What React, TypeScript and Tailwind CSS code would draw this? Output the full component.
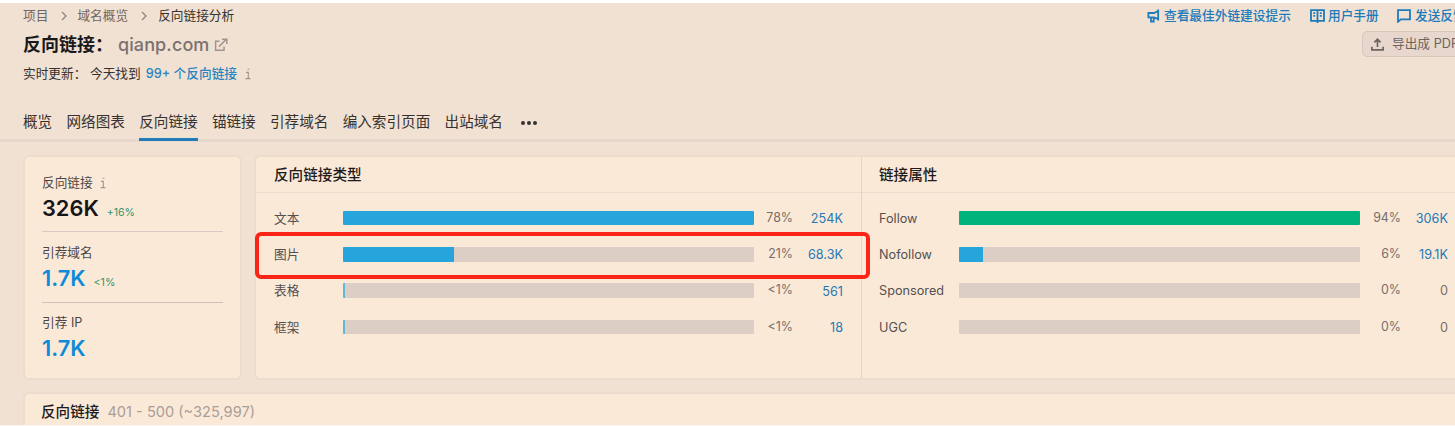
import React from "react";

type Row = { label: string; fill: number; color: string; pct: string; value: string; link: boolean };

const types: Row[] = [
  { label: "文本", fill: 100, color: "bg-[#26a5dc]", pct: "78%", value: "254K", link: true },
  { label: "图片", fill: 27, color: "bg-[#26a5dc]", pct: "21%", value: "68.3K", link: true },
  { label: "表格", fill: 0.6, color: "bg-[#5fb8dc]", pct: "<1%", value: "561", link: true },
  { label: "框架", fill: 0.6, color: "bg-[#5fb8dc]", pct: "<1%", value: "18", link: true },
];

const attributes: Row[] = [
  { label: "Follow", fill: 100, color: "bg-[#00b27c]", pct: "94%", value: "306K", link: true },
  { label: "Nofollow", fill: 6, color: "bg-[#26a5dc]", pct: "6%", value: "19.1K", link: true },
  { label: "Sponsored", fill: 0, color: "bg-[#26a5dc]", pct: "0%", value: "0", link: false },
  { label: "UGC", fill: 0, color: "bg-[#26a5dc]", pct: "0%", value: "0", link: false },
];

const tabs = ["概览", "网络图表", "反向链接", "锚链接", "引荐域名", "编入索引页面", "出站域名"];

function Chevron() {
  return (
    <svg width="6" height="10" viewBox="0 0 6 10" fill="none" stroke="#8d8480" strokeWidth="1.3">
      <path d="M1 1l4 4-4 4" />
    </svg>
  );
}

function Info({ className }: { className?: string }) {
  return (
    <svg className={className} width="6" height="12" viewBox="0 0 6 12" fill="none" stroke="#a0958e" strokeWidth="1.1">
      <path d="M2.6 1.2h1.8M1 4.4h2.3v6.1M.6 10.6h4.8" />
    </svg>
  );
}

function Megaphone() {
  return (
    <svg className="shrink-0" width="13" height="14" viewBox="0 0 13 14" fill="none" stroke="#1c7bbb" strokeWidth="1.8">
      <path d="M11.2 .6v11M11.2 2L7 4H1.4v4.3H7l4.2 1.8M4 8.5v4h2.7v-4" />
    </svg>
  );
}

function Book() {
  return (
    <svg className="shrink-0" width="15" height="14" viewBox="0 0 15 14" fill="none" stroke="#1c7bbb" strokeWidth="1.8">
      <path d="M1 1.2h13v10.6H1zM7.5 1v13M3.3 4.2h1.9M3.3 6.8h1.9M9.8 4.2h1.9M9.8 6.8h1.9" />
    </svg>
  );
}

function Bubble() {
  return (
    <svg className="shrink-0" width="14" height="14" viewBox="0 0 14 14" fill="none" stroke="#1c7bbb" strokeWidth="1.8">
      <path d="M1 12.8V1.2h12v9.2H3.8L1 12.8z" />
    </svg>
  );
}

function Upload() {
  return (
    <svg className="shrink-0" width="13" height="13" viewBox="0 0 13 13" fill="none" stroke="#6c6461" strokeWidth="1.7">
      <path d="M6.5 9V1.6M3.4 4.4l3.1-3.1 3.1 3.1M.9 8.8v3.1h11.2V8.8" />
    </svg>
  );
}

function External() {
  return (
    <svg width="14" height="14" viewBox="0 0 14 14" fill="none" stroke="#a0958e" strokeWidth="1.5">
      <path d="M5.5 3.2H1.6v9H10V8.5M5 8.6l7-7M8 1.2h4.8V6" />
    </svg>
  );
}

function Bars({ title, rows, labelWidth, pctWidth, valueWidth, className, pad }: {
  title: string; rows: Row[]; labelWidth: string; pctWidth: string; valueWidth: string; className: string; pad: string;
}) {
  return (
    <section className={`flex flex-col ${className}`}>
      <h2 className={`flex h-9 shrink-0 items-center border-b border-[#eddccd] pt-[2px] text-[14.6px] font-medium text-[#1d1b1c] ${pad}`}>
        {title}
      </h2>
      <div className={`flex flex-col pt-[7px] ${pad}`}>
        {rows.map((r) => (
          <div key={r.label} className="flex h-[36.3px] items-center text-[12.7px]">
            <span className={`${labelWidth} shrink-0 text-[#555050]`}>{r.label}</span>
            <div className="h-[14.5px] flex-1 overflow-hidden rounded-[1px] bg-[#ddcec5]">
              <div className={`h-full ${r.color}`} style={{ width: `${r.fill}%` }} />
            </div>
            <span className={`${pctWidth} shrink-0 text-right text-[12.4px] text-[#766e6a]`}>{r.pct}</span>
            <span className={`${valueWidth} shrink-0 text-right ${r.link ? "pt-px text-[#2479b5]" : "text-[#766e6a]"}`}>{r.value}</span>
          </div>
        ))}
      </div>
    </section>
  );
}

function Stat({ label, value, change, blue, info }: { label: string; value: string; change?: string; blue?: boolean; info?: boolean }) {
  return (
    <>
      <div className="flex h-5 items-center gap-[7px] text-[12.7px] text-[#4b4646]">
        {label}
        {info && <Info />}
      </div>
      <div className="-mt-px mb-px flex h-8 items-baseline gap-2 leading-8">
        <span className={`text-[21.8px] font-semibold ${blue ? "text-[#0d8ad8]" : "text-[#161519]"}`}>{value}</span>
        {change && <span className="text-[10.6px] text-[#36936b]">{change}</span>}
      </div>
    </>
  );
}

export default function App() {
  return (
    <div className="flex h-[426px] w-[1455px] flex-col overflow-hidden border-t-3 border-b border-t-white border-b-[#faf5f0] bg-[#f0e1d2] font-['Inter','Noto_Sans_CJK_SC',sans-serif] whitespace-nowrap">
      <header className="flex h-[139px] shrink-0 justify-between border-b-3 border-[#e6d8cc] pl-[23px]">
        <div className="flex flex-col">
          <nav className="flex h-[25px] items-center text-[12.7px] text-[#6f6763]">
            <span className="mr-[13px]">项目</span>
            <Chevron />
            <span className="mr-[13px] ml-[10px]">域名概览</span>
            <Chevron />
            <span className="ml-[11px] text-[#37322f]">反向链接分析</span>
          </nav>
          <h1 className="flex h-[33px] items-center text-[18px]">
            <span className="w-[95px] font-bold text-[#1a191c]">反向链接：</span>
            <span className="mr-[5px] font-medium tracking-[0.1px] text-[#7b726f]">qianp.com</span>
            <External />
          </h1>
          <p className="flex h-[26px] items-center text-[12.7px] text-[#37322f]">
            <span className="w-[67px]">实时更新：</span>
            <span className="mr-[5px]">今天找到</span>
            <span className="font-medium text-[#2a85c0]">99+ 个反向链接</span>
            <Info className="ml-2" />
          </p>
          <div className="mt-auto -mb-[2px] flex items-end gap-[14.3px] text-[14.6px] text-[#373230]">
            {tabs.map((t, i) => (
              <span key={t} className={`flex h-[33px] items-center border-b-3 ${i === 2 ? "border-[#227cba]" : "border-transparent"}`}>
                {t}
              </span>
            ))}
            <span className="flex h-[33px] items-center gap-[2px] border-b-3 border-transparent pl-1">
              <i className="size-1 rounded-full bg-[#373230]" />
              <i className="size-1 rounded-full bg-[#373230]" />
              <i className="size-1 rounded-full bg-[#373230]" />
            </span>
          </div>
        </div>
        <div className="flex w-[308px] shrink-0 flex-col overflow-hidden">
          <div className="flex h-[25px] items-center text-[12.7px] font-medium text-[#1c7bbb]">
            <Megaphone />
            <span className="ml-1 w-[146px] shrink-0">查看最佳外链建设提示</span>
            <Book />
            <span className="ml-[3px] w-[69px] shrink-0">用户手册</span>
            <Bubble />
            <span className="ml-1 shrink-0">发送反馈</span>
          </div>
          <button className="mt-[3px] ml-[215px] flex h-[26px] w-[120px] shrink-0 items-center gap-2 rounded-[5px] border border-[#d6c7be] bg-[#e7d7cc] pl-2 text-[12.7px] text-[#6c6461]">
            <Upload />
            <span>导出成 PDF</span>
          </button>
        </div>
      </header>
      <main className="flex shrink-0 flex-col gap-3 pt-[13px] pl-[23px]">
        <div className="flex h-[225px] gap-3">
          <aside className="flex w-[219px] shrink-0 flex-col rounded-md border-2 border-[#ecdccd] bg-[#fbe9d8] px-[17px] pt-4">
            <Stat label="反向链接" value="326K" change="+16%" info />
            <div className="mt-[6px] mb-[11px] h-px shrink-0 bg-[#d9cac1]" />
            <Stat label="引荐域名" value="1.7K" change="<1%" blue />
            <div className="mt-[7px] mb-[10px] h-px shrink-0 bg-[#cfc1ba]" />
            <Stat label="引荐 IP" value="1.7K" blue />
          </aside>
          <div className="relative flex w-[1213px] shrink-0 rounded-l-md border-y-2 border-l-2 border-[#ecdccd] bg-[#fbe9d8]">
            <Bars title="反向链接类型" rows={types} labelWidth="w-[69px]" pctWidth="w-[39px]" valueWidth="w-[50px]" className="w-[606px] border-r border-[#e2d2c7]" pad="pl-[18px] pr-[18px]" />
            <Bars title="链接属性" rows={attributes} labelWidth="w-[80px]" pctWidth="w-[41px]" valueWidth="w-[47px]" className="flex-1" pad="pl-[17px] pr-[19px]" />
            <div className="absolute top-[75px] -left-px h-[47px] w-[615px] rounded-[6px] border-4 border-[#fb2517]" />
          </div>
        </div>
        <section className="flex h-[60px] items-start gap-2 rounded-tl-md border-t-2 border-l-2 border-[#ecdccd] bg-[#fbe9d8] pt-2 pl-4 text-[14.6px]">
          <span className="font-medium text-[#1d1b1c]">反向链接</span>
          <span className="text-[#a99e98]">401 - 500 (~325,997)</span>
        </section>
      </main>
    </div>
  );
}
